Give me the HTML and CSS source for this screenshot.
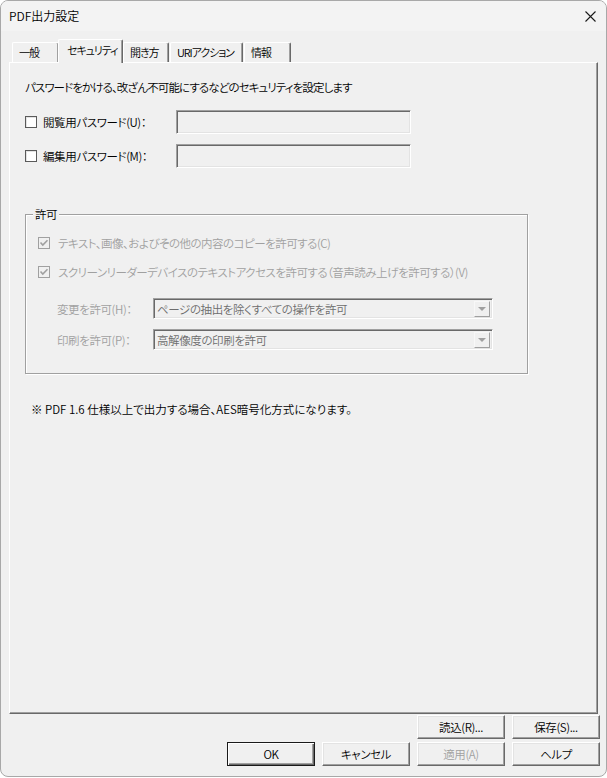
FILE: index.html
```html
<!DOCTYPE html>
<html lang="ja">
<head>
    <meta charset="UTF-8">
    <meta name="viewport" content="width=device-width, initial-scale=1.0">
    <title>PDF出力設定</title>
    <link rel="stylesheet" href="styles.css">
</head>
<body>
    <div class="window">
        <div class="titlebar">
            <span class="title">PDF出力設定</span>
            <svg class="close" width="11" height="11" viewBox="0 0 11 11">
                <path d="M0.5 0.5 L10.5 10.5 M10.5 0.5 L0.5 10.5" stroke="#1a1a1a" stroke-width="1.1" fill="none"/>
            </svg>
        </div>
        <div class="client">
            <div class="tabs">
                <div class="tab tab-general">一般</div>
                <div class="tab tab-security selected">セキュリティ</div>
                <div class="tab tab-open">開き方</div>
                <div class="tab tab-uri">URIアクション</div>
                <div class="tab tab-info">情報</div>
            </div>
            <div class="panel">
                <p class="intro">パスワードをかける、改ざん不可能にするなどのセキュリティを設定します</p>

                <div class="pw-row">
                    <label class="check">
                        <span class="box"></span>
                        <span>閲覧用パスワード(U)：</span>
                    </label>
                    <span class="field"></span>
                </div>
                <div class="pw-row">
                    <label class="check">
                        <span class="box"></span>
                        <span>編集用パスワード(M)：</span>
                    </label>
                    <span class="field"></span>
                </div>

                <div class="group">
                    <div class="group-title">許可</div>
                    <div class="perm-row">
                        <svg class="box-checked" width="12" height="12" viewBox="0 0 12 12">
                            <rect x="0.5" y="0.5" width="11" height="11" fill="#f0f0f0" stroke="#a0a0a0"/>
                            <path d="M2.5 5.5 L4.8 8 L9.5 3.2" stroke="#a0a0a0" stroke-width="1.6" fill="none"/>
                        </svg>
                        <span>テキスト、画像、およびその他の内容のコピーを許可する(C)</span>
                    </div>
                    <div class="perm-row">
                        <svg class="box-checked" width="12" height="12" viewBox="0 0 12 12">
                            <rect x="0.5" y="0.5" width="11" height="11" fill="#f0f0f0" stroke="#a0a0a0"/>
                            <path d="M2.5 5.5 L4.8 8 L9.5 3.2" stroke="#a0a0a0" stroke-width="1.6" fill="none"/>
                        </svg>
                        <span>スクリーンリーダーデバイスのテキストアクセスを許可する（音声読み上げを許可する）(V)</span>
                    </div>
                    <div class="select-row first">
                        <span class="select-label">変更を許可(H)：</span>
                        <span class="select">
                            <span class="select-text">ページの抽出を除くすべての操作を許可</span>
                            <span class="drop"><span class="arrow"></span></span>
                        </span>
                    </div>
                    <div class="select-row">
                        <span class="select-label">印刷を許可(P)：</span>
                        <span class="select">
                            <span class="select-text">高解像度の印刷を許可</span>
                            <span class="drop"><span class="arrow"></span></span>
                        </span>
                    </div>
                </div>

                <p class="note">※ PDF 1.6 仕様以上で出力する場合、AES暗号化方式になります。</p>
            </div>

            <div class="buttons">
                <button class="btn btn-load">読込(R)...</button>
                <button class="btn">保存(S)...</button>
                <button class="btn default">OK</button>
                <button class="btn">キャンセル</button>
                <button class="btn" disabled>適用(A)</button>
                <button class="btn">ヘルプ</button>
            </div>
        </div>
    </div>
</body>
</html>
```
FILE: styles.css
```css
* {
    box-sizing: border-box;
}

body {
    margin: 0;
    background: #ffffff;
    font-family: "Noto Sans CJK JP", "Noto Sans", sans-serif;
    font-size: 11.5px;
    font-weight: 350;
    font-feature-settings: "palt";
    letter-spacing: -0.4px;
    color: #000000;
}

.window {
    width: 607px;
    height: 777px;
    border: 1px solid #a8a8a8;
    border-radius: 8px;
    background: #f0f0f0;
    display: flex;
    flex-direction: column;
    overflow: hidden;
}

.titlebar {
    height: 30px;
    background: #f3f3f3;
    display: flex;
    align-items: center;
    justify-content: space-between;
    padding: 0 10px 0 8px;
}

.title {
    line-height: 16px;
    font-size: 12px;
    letter-spacing: 0;
}

.client {
    flex: 1;
    padding: 8px 8px 0 8px;
    display: flex;
    flex-direction: column;
}

/* tabs */
.tabs {
    display: flex;
    align-items: flex-end;
    height: 23px;
    padding-left: 3px;
    position: relative;
    z-index: 1;
}

.tab {
    height: 20px;
    padding: 0 0 0 6px;
    font-size: 11px;
    line-height: 18px;
    letter-spacing: -1.1px;
    white-space: nowrap;
    border: 1px solid;
    border-color: #ffffff #696969 transparent #ffffff;
    border-bottom: none;
    border-radius: 2px 2px 0 0;
    box-shadow: inset -1px 0 #a0a0a0;
    background: #f0f0f0;
    margin-right: 1px;
}

.tab.selected {
    height: 24px;
    margin: 0 0 -1px -2px;
    padding-left: 8px;
    line-height: 20px;
    position: relative;
    z-index: 2;
}

.tab-general { width: 47px; }
.tab-security { width: 65px; }
.tab-open { width: 46px; }
.tab-uri { width: 73px; }
.tab-info { width: 47px; }

.panel {
    height: 652px;
    border: 1px solid;
    border-color: #ffffff #696969 #696969 #ffffff;
    box-shadow: inset -1px -1px #a0a0a0;
    padding: 16px 15px 0 15px;
}

.intro {
    margin: 0;
    line-height: 16px;
    letter-spacing: -0.9px;
}

/* password rows */
.pw-row {
    display: flex;
    align-items: center;
    height: 24px;
    margin-top: 10px;
}

.intro + .pw-row {
    margin-top: 15px;
}

.check {
    width: 151px;
    display: flex;
    align-items: center;
    gap: 6px;
}

.box {
    width: 12px;
    height: 12px;
    border: 1px solid #5a5a5a;
    background: #ffffff;
    box-shadow: inset 1px 1px #e3e3e3;
}

.field {
    width: 235px;
    height: 24px;
    border: 1px solid;
    border-color: #a0a0a0 #ffffff #ffffff #a0a0a0;
    box-shadow: inset 1px 1px #696969, inset -1px -1px #e3e3e3;
    background: #f0f0f0;
}

/* permission group */
.group {
    width: 503px;
    height: 160px;
    margin-top: 46px;
    border: 1px solid #a0a0a0;
    box-shadow: 1px 1px 0 #ffffff, inset 1px 1px 0 #ffffff;
    padding-left: 12px;
}

.group-title {
    width: fit-content;
    margin: -9px 0 0 -5px;
    padding: 0 2px;
    line-height: 16px;
    background: #f0f0f0;
}

.perm-row {
    display: flex;
    align-items: center;
    gap: 8px;
    height: 16px;
    margin-top: 13px;
    color: #a0a0a0;
    letter-spacing: -0.5px;
}

.select-row {
    display: flex;
    align-items: center;
    margin: 10px 0 0 19px;
}

.select-row.first {
    margin-top: 18px;
}

.select-label {
    width: 96px;
    color: #a0a0a0;
}

.select {
    width: 340px;
    height: 21px;
    display: flex;
    align-items: center;
    border: 1px solid;
    border-color: #a0a0a0 #ffffff #ffffff #a0a0a0;
    box-shadow: inset 1px 1px #696969, inset -1px -1px #e3e3e3;
    background: #f0f0f0;
    padding: 2px 2px 1px 3px;
}

.select-text {
    flex: 1;
    color: #6d6d6d;
}

.drop {
    width: 16px;
    height: 100%;
    border: 1px solid;
    border-color: #f8f8f8 #a0a0a0 #a0a0a0 #f8f8f8;
    display: flex;
    align-items: center;
    justify-content: center;
}

.arrow {
    width: 0;
    height: 0;
    border-left: 4px solid transparent;
    border-right: 4px solid transparent;
    border-top: 4px solid #a0a0a0;
}

.note {
    margin: 27px 0 0 6px;
    line-height: 16px;
    letter-spacing: 0;
}

/* bottom buttons */
.buttons {
    display: grid;
    grid-template-columns: repeat(4, 88px);
    grid-auto-rows: 24px;
    column-gap: 7px;
    row-gap: 3px;
    justify-content: end;
    margin: 1px -2px 0 0;
}

.btn {
    font-family: inherit;
    font-size: 11.5px;
    font-weight: 350;
    font-feature-settings: "palt";
    letter-spacing: -0.4px;
    color: #000000;
    background: #f0f0f0;
    border: 1px solid;
    border-color: #ffffff #696969 #696969 #ffffff;
    box-shadow: inset -1px -1px #a0a0a0, inset 1px 1px #e3e3e3;
    padding: 0;
    border-radius: 0;
}

.btn-load {
    grid-column: 3;
}

.btn.default {
    border-color: #1a1a1a;
    box-shadow: inset 1px 1px #ffffff, inset -1px -1px #696969, inset -2px -2px #a0a0a0;
}

.btn:disabled {
    color: #a0a0a0;
}
```
